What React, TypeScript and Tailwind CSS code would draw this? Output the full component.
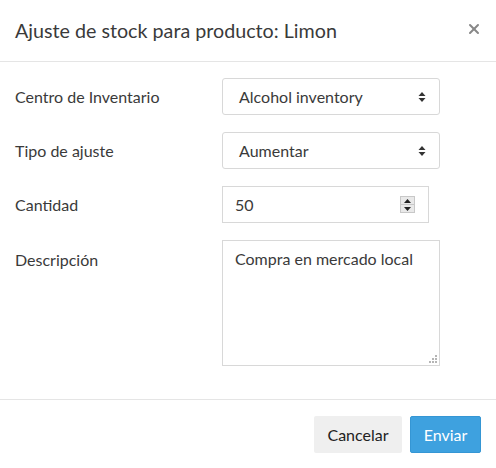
import { X } from 'lucide-react'

const LABEL = 'text-[16px] text-[#3a3a3a] leading-[20px]'

function SelectBox({ value }: { value: string }) {
  return (
    <div className="relative flex h-[37px] w-[218px] items-center rounded-[3px] border border-[#d8d8d8] bg-white pl-[16px] text-[16px] text-[#3a3a3a]">
      <span>{value}</span>
      <svg
        className="absolute right-[13px] top-[13px]"
        width="8"
        height="10"
        viewBox="0 0 8 10"
      >
        <path d="M4 0 L7.5 4 H0.5 Z" fill="#333" />
        <path d="M0.5 6 H7.5 L4 10 Z" fill="#333" />
      </svg>
    </div>
  )
}

function Spinner() {
  return (
    <div className="absolute right-[13px] top-[9px] flex h-[17px] w-[15px] flex-col border border-[#c8c8c8] bg-[#e9e9e9]">
      <div className="flex flex-1 items-center justify-center border-b border-[#c8c8c8]">
        <svg width="7" height="4" viewBox="0 0 7 4">
          <path d="M3.5 0 L7 4 H0 Z" fill="#222" />
        </svg>
      </div>
      <div className="flex flex-1 items-center justify-center">
        <svg width="7" height="4" viewBox="0 0 7 4">
          <path d="M0 0 H7 L3.5 4 Z" fill="#222" />
        </svg>
      </div>
    </div>
  )
}

export default function App() {
  return (
    <div
      className="flex min-h-[468px] w-[496px] flex-col bg-white text-[#3a3a3a]"
      style={{ fontFamily: 'Lato, "Noto Sans", sans-serif' }}
    >
      {/* Header */}
      <div className="flex h-[62px] items-center justify-between border-b border-[#e5e5e5] pl-[15px] pr-[14px]">
        <h4 className="text-[19.7px] leading-[26px] text-[#3a3a3a]">
          Ajuste de stock para producto: Limon
        </h4>
        <X size={16} strokeWidth={3} className="mb-[3px] text-[#888]" />
      </div>

      {/* Body */}
      <div className="flex flex-col gap-[17px] px-[15px] pb-[33px] pt-[16px]">
        <div className="flex items-center">
          <label className={`${LABEL} w-[207px]`}>Centro de Inventario</label>
          <SelectBox value="Alcohol inventory" />
        </div>
        <div className="flex items-center">
          <label className={`${LABEL} w-[207px]`}>Tipo de ajuste</label>
          <SelectBox value="Aumentar" />
        </div>
        <div className="flex items-center">
          <label className={`${LABEL} w-[207px]`}>Cantidad</label>
          <div className="relative flex h-[37px] w-[207px] items-center border border-[#d8d8d8] bg-white pl-[12px] text-[16px] text-[#3a3a3a]">
            50
            <Spinner />
          </div>
        </div>
        <div className="flex items-start">
          <label className={`${LABEL} w-[207px] pt-[10px]`}>Descripción</label>
          <div className="relative h-[126px] w-[218px] border border-[#d8d8d8] bg-white px-[12px] pt-[8px] text-[16px] leading-[20px] text-[#3a3a3a]">
            Compra en mercado local
            <svg
              className="absolute bottom-[2px] right-[2px]"
              width="8"
              height="8"
              viewBox="0 0 8 8"
            >
              <rect x="6" y="0" width="2" height="2" fill="#b5b5b5" />
              <rect x="3" y="3" width="2" height="2" fill="#b5b5b5" />
              <rect x="6" y="3" width="2" height="2" fill="#b5b5b5" />
              <rect x="0" y="6" width="2" height="2" fill="#b5b5b5" />
              <rect x="3" y="6" width="2" height="2" fill="#b5b5b5" />
              <rect x="6" y="6" width="2" height="2" fill="#b5b5b5" />
            </svg>
          </div>
        </div>
      </div>

      {/* Footer */}
      <div className="flex justify-end gap-[8px] border-t border-[#e5e5e5] pr-[15px] pt-[16px]">
        <button className="h-[37px] w-[88px] rounded-[2px] bg-[#efefef] text-[16px] text-[#222]">
          Cancelar
        </button>
        <button className="h-[37px] w-[71px] rounded-[2px] border border-[#3596d4] bg-[#3ea1df] text-[16px] text-white">
          Enviar
        </button>
      </div>
    </div>
  )
}
